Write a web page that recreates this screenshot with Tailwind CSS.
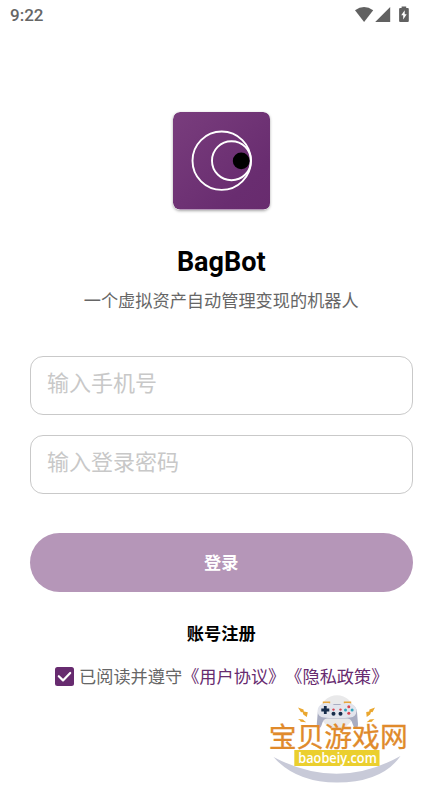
<!DOCTYPE html>
<html lang="zh-CN">
<head>
<meta charset="utf-8">
<meta name="viewport" content="width=device-width, initial-scale=1">
<title>BagBot</title>
<script src="https://cdn.jsdelivr.net/npm/@tailwindcss/browser@4"></script>
</head>
<body class="bg-white">
<div class="relative flex h-[788px] w-[443px] flex-col overflow-hidden bg-white font-[Roboto,'Noto_Sans_CJK_SC',sans-serif]">
  <header class="flex h-[30px] shrink-0 items-center justify-between pl-[10px] pr-[34px] text-[#666]">
    <span class="text-[17px] leading-[30px] font-medium">9:22</span>
    <svg class="h-[30px] w-[55px]" viewBox="354 0 55 30" fill="#616161">
      <path d="M355 10.3Q364 3.8 373.2 10.3L364.1 22Z"/>
      <path d="M390.2 7V22H375.2Z"/>
      <path d="M401.6 8V6.5h4.6V8h1.6q1 0 1 1v12q0 1-1 1h-7.7q-1 0-1-1V9q0-1 1-1z"/>
      <path d="M404.7 10.2l-3.5 5.1h2v4.1l3.5-5.2h-2z" fill="#fff"/>
    </svg>
  </header>

  <main class="flex flex-col pt-[82px] pr-[30px] pl-[29.5px]">
    <svg class="h-[97.5px] w-[97.5px] self-center rounded-[7px] shadow-[0_1px_3px_rgba(0,0,0,0.35)]" viewBox="0 0 97.5 97.5">
      <defs>
        <linearGradient id="plum" x1="0" y1="0" x2="1" y2="1">
          <stop offset="0" stop-color="#793d7d"/>
          <stop offset="0.75" stop-color="#692d70"/>
          <stop offset="1" stop-color="#682b6e"/>
        </linearGradient>
      </defs>
      <rect width="97.5" height="97.5" rx="7" fill="url(#plum)"/>
      <circle cx="68.2" cy="48.9" r="8.4" fill="#000"/>
      <circle cx="48.7" cy="48.7" r="29.2" fill="none" stroke="#fff" stroke-width="1.9"/>
      <circle cx="58.5" cy="48.7" r="19.5" fill="none" stroke="#fff" stroke-width="1.9"/>
    </svg>
    <h1 class="mt-[36px] text-center text-[27px] leading-[32px] font-bold text-black">BagBot</h1>
    <p class="mt-[11px] text-center text-[17.2px] leading-[24px] text-[#666]">一个虚拟资产自动管理变现的机器人</p>

    <div class="mt-[43px] flex h-[59px] items-center rounded-[13px] border-[1.3px] border-[#c9c9c9] pb-[3px] pl-[16.5px] text-[22px] text-[#c8c8c8]">输入手机号</div>
    <div class="mt-[20px] flex h-[59px] items-center rounded-[13px] border-[1.3px] border-[#c9c9c9] pb-[3px] pl-[16.5px] text-[22px] text-[#c8c8c8]">输入登录密码</div>

    <button class="mt-[39px] h-[59px] rounded-full bg-[#b596b8] pt-[3px] text-[17.2px] font-bold text-white">登录</button>
    <a class="mt-[30px] text-center text-[17.2px] leading-[24px] font-bold text-black">账号注册</a>

    <div class="mt-[19px] flex h-[24px] items-center pl-[25.5px] text-[17.2px] leading-[24px] whitespace-nowrap text-[#666]">
      <svg class="mr-[5px] h-[19px] w-[19px] shrink-0" viewBox="0 0 19 19">
        <rect width="19" height="19" rx="2.5" fill="#672b6f"/>
        <path d="M3.8 9.2l4.2 4.2 7.2-7.4" fill="none" stroke="#fff" stroke-width="2.2" stroke-linecap="round" stroke-linejoin="round"/>
      </svg>
      <span class="pt-px">已阅读并遵守</span>
      <a class="pt-px text-[#672b6f] [text-spacing-trim:space-all]">《用户协议》</a>
      <a class="pt-px text-[#672b6f] [text-spacing-trim:space-all]">《隐私政策》</a>
    </div>
  </main>

  <svg class="absolute top-[690px] left-[260px] h-[98px] w-[160px]" viewBox="0 0 160 98">
    <circle cx="77" cy="22" r="16.8" fill="#e9e9ea"/>
    <path d="M13.5 67Q78 101 140.5 66Q122 92.5 77 92.5Q36 92.5 13.5 67Z" fill="#c8cad8"/>
    <path d="M63.5 13.600v-1.300h6v1.300M84.500 13.600v-1.300h6v1.300" fill="none" stroke="#e8a63c" stroke-width="1.400"/>
    <path d="M64 14h26q6 1 7 8l1 12q0 4-2 4t-3.200-3.500q-1.500-6-5-6H67q-3.800 0-5.200 6-1 3.500-3 3.500t-2-4l1-12q1-7 6.200-8z" fill="#a9adc2"/>
    <path d="M64 13.500h8l2 1.500h6l2-1.500h8q6.500 1.500 6.500 7.500-.5 6-6.500 6.500-3 0-5 .5H69q-2-.5-5-.5-6-.5-6.500-6.500 0-6 6.500-7.500z" fill="#e3e5ed"/>
    <path d="M65.300 16v8M61.300 20h8" stroke="#172d4b" stroke-width="2.800"/>
    <g fill="#172d4b"><circle cx="73.500" cy="23.800" r="2"/><circle cx="80.500" cy="23.800" r="2"/></g>
    <g fill="#d94450"><circle cx="73.500" cy="19.600" r="1.200"/><circle cx="80.500" cy="19.600" r="1.200"/><circle cx="88.800" cy="16.700" r="1.500"/><circle cx="88.800" cy="23.300" r="1.500"/></g>
    <g fill="#32a6bd"><circle cx="85.500" cy="20" r="1.500"/><circle cx="92.100" cy="20" r="1.500"/></g>
    <text x="8.700" y="57.300" font-family="'Noto Sans CJK SC',sans-serif" font-size="27.800" font-weight="400" fill="#e08a2b" stroke="#e08a2b" stroke-width="0.300">宝贝游戏网</text>
    <g fill="#eaa72f">
      <path d="M38 17.500l5.500 2 .3 2 4 .8-1 4.700-3.500-2.500-.8-2.500-1.500.2z"/>
      <path d="M38 29l5 .4 1.200 1.400 2 1.500-5.500-.6-.7-1.200z"/>
      <path d="M115 17.500l-5.500 2-.3 2-3 .5.500 5 3.500-2.500.8-2.500 1.500.2z"/>
      <path d="M114.500 29l-4.800.4-1.200 1.400-2 1.500 5.500-.6.700-1.200z"/>
    </g>
    <rect x="34.300" y="60" width="85.200" height="16" fill="#ebcf2e"/>
    <text x="38.300" y="73" textLength="78.500" lengthAdjust="spacingAndGlyphs" font-family="'Open Sans',sans-serif" font-size="14" font-weight="600" fill="#fff">baobeiy.com</text>
  </svg>
</div>
</body>
</html>
